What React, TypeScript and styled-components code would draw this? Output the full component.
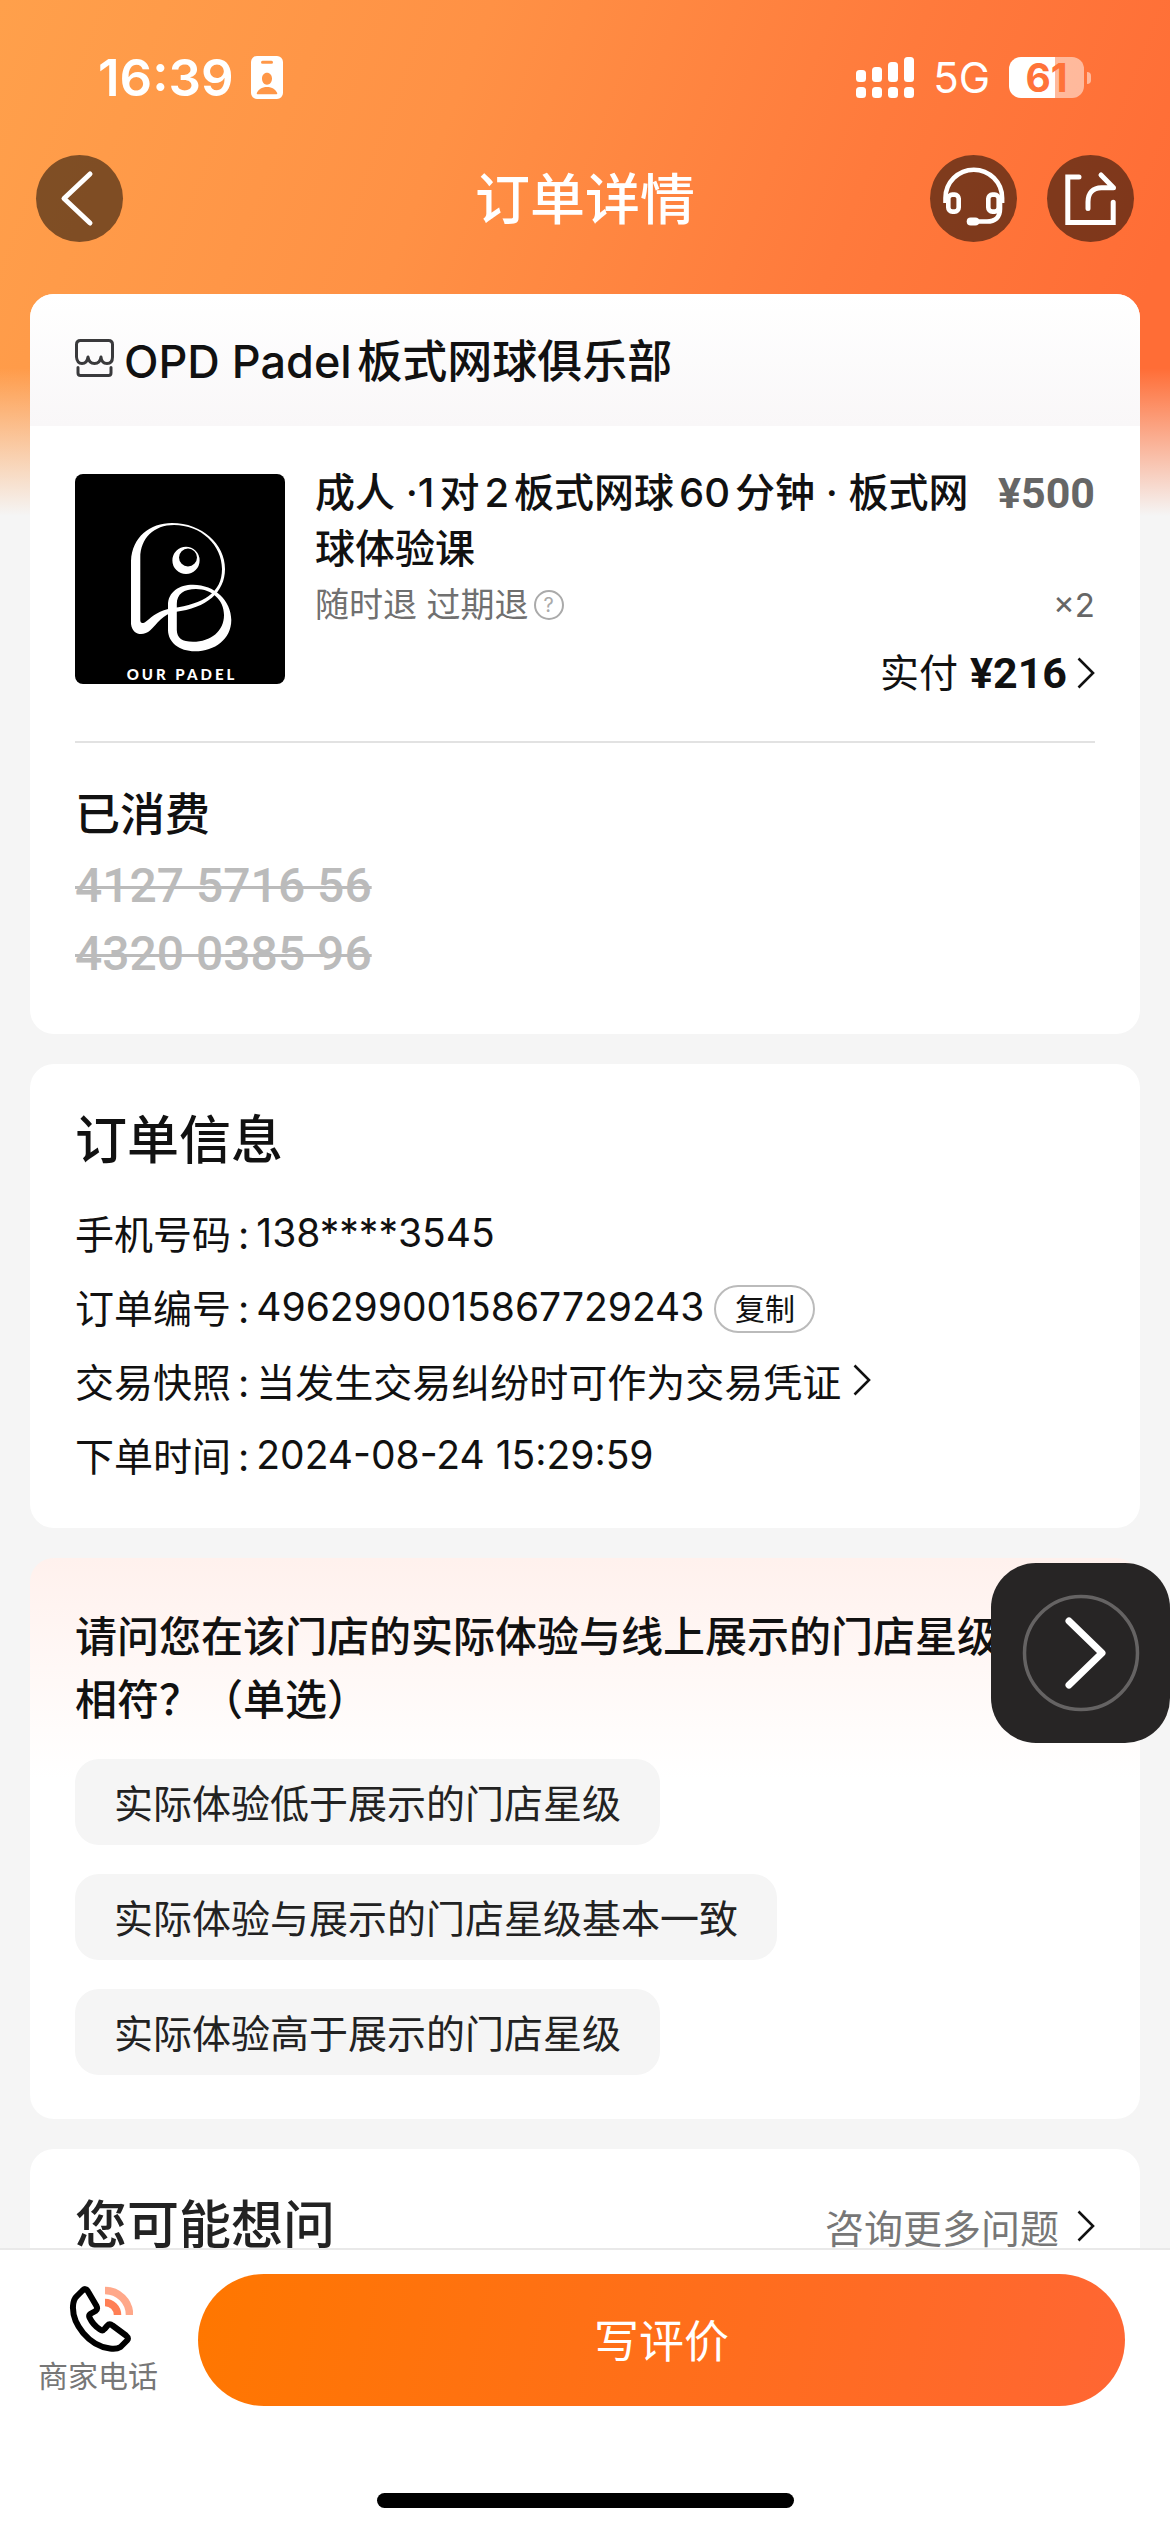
import React from "react";
import styled, { createGlobalStyle } from "styled-components";

const GlobalStyle = createGlobalStyle`
  * { box-sizing: border-box; }
  body {
    margin: 0;
    font-family: Inter, "Noto Sans CJK SC", sans-serif;
    color: #111;
    text-autospace: normal;
    text-spacing-trim: space-all;
  }
  button { font-family: inherit; color: inherit; border: 0; padding: 0; background: none; cursor: pointer; }
  a { color: inherit; text-decoration: none; }
  h1, h2, h3, p, dl, dd, dt, ul { margin: 0; padding: 0; font-weight: 400; }
  svg { display: block; flex: none; }
`;

const Screen = styled.div`
  height: 100vh;
  display: flex;
  flex-direction: column;
  position: relative;
  background-color: #f5f5f5;
  background-image: linear-gradient(180deg, rgba(245, 245, 245, 0) 368px, #f5f5f5 516px),
    linear-gradient(111deg, #ffa04b 0%, #ff9145 36%, #ff7a3c 68%, #ff6d36 92%);
  background-size: 100% 520px;
  background-repeat: no-repeat;
`;

const StatusBar = styled.div`
  flex: none;
  height: 155px;
  padding: 0 79px 0 98px;
  display: flex;
  align-items: center;
  justify-content: space-between;
  color: #fff;
`;

const StatusGroup = styled.div<{ $gap: number }>`
  display: flex;
  align-items: center;
  gap: ${(p) => p.$gap}px;
`;

const Clock = styled.span`
  font-size: 51px;
  line-height: 60px;
  font-weight: 600;
`;

const Network = styled.span`
  font-size: 42px;
  line-height: 60px;
`;

const Battery = styled.span`
  display: flex;
  align-items: center;
  gap: 3px;
  &::after {
    content: "";
    width: 4px;
    height: 12px;
    border-radius: 0 6px 6px 0;
    background: rgba(255, 255, 255, 0.5);
  }
`;

const BatteryBody = styled.span<{ $level: number }>`
  width: 75px;
  height: 41px;
  border-radius: 12px;
  display: grid;
  place-items: center;
  font-size: 39px;
  line-height: 41px;
  font-weight: 700;
  color: #ff7339;
  background: linear-gradient(90deg, #fff ${(p) => p.$level}%, rgba(255, 255, 255, 0.5) ${(p) => p.$level}%);
`;

const NavBar = styled.header`
  flex: none;
  padding: 0 36px;
  display: grid;
  grid-template-columns: 1fr auto 1fr;
  align-items: center;
`;

const NavTitle = styled.h1`
  font-size: 55px;
  line-height: 60px;
  font-weight: 500;
  color: #fff;
`;

const NavActions = styled.div`
  display: flex;
  gap: 30px;
  justify-content: flex-end;
`;

const RoundButton = styled.button`
  width: 87px;
  height: 87px;
  border-radius: 50%;
  background: rgba(0, 0, 0, 0.5);
`;

const Content = styled.main`
  flex: 1;
  min-height: 0;
  overflow-y: auto;
  scrollbar-width: none;
  margin-top: 52px;
  padding: 0 30px;
  display: flex;
  flex-direction: column;
  gap: 30px;
`;

const Card = styled.section<{ $tinted?: boolean; $top: number; $bottom: number }>`
  flex: none;
  border-radius: 24px;
  overflow: hidden;
  padding: ${(p) => p.$top}px 45px ${(p) => p.$bottom}px;
  background: ${(p) => (p.$tinted ? "linear-gradient(180deg, #fff1ed 0, #fff 220px)" : "#fff")};
`;

const Store = styled.a`
  display: flex;
  align-items: center;
  gap: 10px;
  height: 132px;
  margin: 0 -45px;
  padding: 0 45px 4px;
  font-size: 45px;
  font-weight: 500;
  background: linear-gradient(180deg, #fff, #f9f7f8);
`;

const Product = styled.div`
  display: flex;
  align-items: flex-start;
  gap: 30px;
  padding: 39px 0 40px;
  border-bottom: 2px solid #e2e2e2;
`;

const Cover = styled.div`
  flex: none;
  width: 210px;
  height: 210px;
  margin-top: 9px;
  border-radius: 8px;
  overflow: hidden;
  background: #000;
`;

const ProductInfo = styled.div`
  flex: 1;
  min-width: 0;
`;

const SplitRow = styled.div`
  display: flex;
  justify-content: space-between;
  gap: 20px;
  line-height: 56px;
`;

const ProductName = styled.h2`
  font-size: 40px;
  font-weight: 500;
`;

const Price = styled.span<{ $muted?: boolean }>`
  font-family: Roboto, sans-serif;
  font-size: 43px;
  font-weight: 700;
  color: ${(p) => (p.$muted ? "#666" : "#111")};
`;

const Refund = styled.span`
  display: flex;
  align-items: center;
  gap: 5px;
  font-size: 34px;
  color: #707070;
`;

const HelpButton = styled.button`
  width: 30px;
  height: 30px;
  border: 2px solid #aaa;
  border-radius: 50%;
  font-size: 20px;
  line-height: 26px;
  color: #aaa;
`;

const Quantity = styled.span`
  font-size: 33px;
  color: #666;
`;

const Paid = styled.a`
  margin-top: 12px;
  display: flex;
  align-items: center;
  justify-content: flex-end;
  font-size: 39px;
  line-height: 56px;
  ${Price} { margin: 0 10px 0 12px; }
`;

const Used = styled.h3`
  margin: 42px 0 7px;
  font-size: 45px;
  line-height: 60px;
  font-weight: 500;
`;

const Code = styled.p`
  font-family: Roboto, sans-serif;
  font-size: 48px;
  line-height: 68px;
  font-weight: 500;
  color: #bbb;
  text-decoration: line-through;
  text-decoration-thickness: 3px;
`;

const SectionTitle = styled.h2`
  font-size: 52px;
  line-height: 60px;
  font-weight: 500;
`;

const Details = styled.dl`
  margin-top: 24px;
  font-size: 39px;
`;

const DetailRow = styled.div`
  display: flex;
  align-items: center;
  height: 74px;
  dt::after { content: ":"; padding: 0 7px; }
  dd { display: flex; align-items: center; }
`;

const CopyButton = styled.button`
  width: 101px;
  height: 48px;
  margin: 5px 0 0 10px;
  border: 2px solid #bbb;
  border-radius: 24px;
  font-size: 30px;
  line-height: 44px;
`;

const TextLink = styled.a<{ $gap: number; $muted?: boolean }>`
  display: flex;
  align-items: center;
  gap: ${(p) => p.$gap}px;
  font-size: 39px;
  color: ${(p) => (p.$muted ? "#777" : "#111")};
`;

const Question = styled.h2`
  font-size: 42px;
  line-height: 63px;
  font-weight: 500;
  margin-bottom: 28px;
  white-space: nowrap;
`;

const Options = styled.div`
  display: flex;
  flex-direction: column;
  align-items: flex-start;
  gap: 29px;
`;

const Option = styled.button`
  height: 86px;
  padding: 0 39px 3px;
  border-radius: 24px;
  background: #f5f5f5;
  font-size: 39px;
  color: #222;
`;

const AskHeader = styled.div`
  display: flex;
  align-items: center;
  justify-content: space-between;
  color: #222;
`;

const Footer = styled.footer`
  flex: none;
  border-top: 2px solid #e9e9e9;
  background: #fff;
  padding: 24px 0;
`;

const FooterActions = styled.div`
  display: flex;
  align-items: center;
  gap: 40px;
  padding: 0 45px 0 38px;
`;

const CallButton = styled.button`
  display: flex;
  flex-direction: column;
  align-items: center;
  gap: 6px;
  font-size: 30px;
  line-height: 36px;
  color: #777;
`;

const ReviewButton = styled.button`
  flex: 1;
  height: 132px;
  padding-bottom: 3px;
  border-radius: 66px;
  background: linear-gradient(100deg, #ff7700, #ff6633);
  font-size: 45px;
  color: #fff;
`;

const HomeIndicator = styled.div`
  width: 417px;
  height: 15px;
  border-radius: 8px;
  margin: 87px auto 0;
  background: #000;
`;

const FloatingButton = styled.button`
  position: absolute;
  right: 0;
  bottom: 789px;
  width: 179px;
  height: 180px;
  border-radius: 45px;
  background: #272525;
  display: grid;
  place-items: center;
`;

const Chevron = () => (
  <svg width="18" height="32" viewBox="0 0 18 32" fill="none" stroke="#111" strokeWidth="2.600" aria-hidden="true">
    <path d="M1.5 1.5 16 16 1.5 30.5" />
  </svg>
);

const BadgeIcon = () => (
  <svg width="32" height="43" viewBox="0 0 32 43" fill="#fff" fillRule="evenodd" aria-hidden="true">
    <path d="M6 0h20a6 6 0 0 1 6 6v31a6 6 0 0 1-6 6H6a6 6 0 0 1-6-6V6a6 6 0 0 1 6-6Zm5.500 4.700a1.500 1.500 0 0 0 0 3h9a1.500 1.500 0 0 0 0-3ZM16 16.700c-2.900 0-5 2.500-5 5.900s2.100 6.200 5 6.200 5-2.800 5-6.200-2.100-5.900-5-5.900ZM6.500 38.300h19c.6 0 .9-.4.7-1.200-1.200-3.500-5-6.200-10.200-6.200s-9 2.700-10.200 6.200c-.2.800.1 1.200.7 1.200Z" />
  </svg>
);

const SignalIcon = () => (
  <svg width="58" height="41" viewBox="0 0 58 41" fill="#fff" aria-hidden="true">
    {[13, 10, 5, 0].map((top, i) => (
      <g key={top}>
        <rect x={i * 16} y={top} width="10" height={25 - top} rx="3.500" />
        <rect x={i * 16} y="30" width="10" height="11" rx="3.500" />
      </g>
    ))}
  </svg>
);

const BackIcon = () => (
  <svg width="87" height="87" viewBox="0 0 87 87" fill="none" stroke="#fff" strokeWidth="5" strokeLinecap="round" strokeLinejoin="round" aria-hidden="true">
    <path d="M54 19 28 43.500 54 68" />
  </svg>
);

const HeadsetIcon = () => (
  <svg width="87" height="87" viewBox="0 0 87 87" fill="none" stroke="#fff" strokeWidth="4.600" aria-hidden="true">
    <path d="M15.500 48v-5a28.300 28.300 0 0 1 56.600 0v5" />
    <rect x="18.300" y="39.600" width="10.400" height="17" rx="4" />
    <rect x="58.300" y="39.600" width="10.400" height="17" rx="4" />
    <path d="M70 48v6c0 8.500-5 12.500-13 12.500H46" />
    <rect x="36.700" y="62.500" width="12.600" height="8" rx="4" fill="#fff" stroke="none" />
  </svg>
);

const ShareIcon = () => (
  <svg width="87" height="87" viewBox="0 0 87 87" fill="none" stroke="#fff" strokeWidth="5" strokeLinecap="round" aria-hidden="true">
    <path d="M32 22H20.800v45.400h45.400V47.300" />
    <path d="M41 53.500V47c0-9 5-14.300 13.500-14.300h12L54 20" strokeLinejoin="round" />
  </svg>
);

const StoreIcon = () => (
  <svg width="39" height="38" viewBox="0 0 39 38" fill="none" stroke="#3a3a3c" strokeWidth="3" strokeLinejoin="round" strokeLinecap="round" aria-hidden="true">
    <path d="M1.500 18V5.500q0-4 4-4h28q4 0 4 4V18q0 6.500-5.500 6.500T26 18q-1 6.500-6.500 6.500T13 18q-1 6.500-6 6.500T1.500 18Z" />
    <path d="M3 28.500V34q0 2.500 2.500 2.500h28Q36 36.500 36 34v-5.500" />
  </svg>
);

const PadelLogo = () => (
  <svg width="210" height="210" viewBox="0 0 210 210" fill="#fff" fillRule="evenodd" role="img" aria-label="OUR PADEL">
    <path d="M56 87C57 63 75 49 97 49C127 49 150 70 150 95C150 118 132 134 100 138C88 140 82 150 75 156.500C69 162 57.500 162 56 150ZM65.300 84V146.500C65.500 149.500 68 149.800 71 147.500C78 142 84 136 98 134C128 130 147 119 147 95C147 71 126 51 99 51C79 51 65.300 64 65.300 84Z" />
    <path d="M93 131C93 118 104 110.700 118 110.700C140 110.700 156.300 127 156.300 146C156.300 165 140 177.300 120 177.300C104 177.300 93 168 93 156ZM101.800 130V156C102 164 107 167.800 118 167.800C136 167.800 149 157 149 141C149 126 137 115 121 115C109 115 101.800 120 101.800 130Z" />
    <path d="M111 72.800a13.600 13.600 0 1 0 0 27.200a13.600 13.600 0 1 0 0-27.200ZM113 74.500a9 9 0 1 0 0 18a9 9 0 1 0 0-18Z" />
    <text x="107" y="206" textAnchor="middle" fontFamily="Lato, sans-serif" fontWeight="900" fontSize="15" letterSpacing="3">OUR PADEL</text>
  </svg>
);

const CallIcon = () => (
  <svg width="70" height="66" viewBox="0 0 70 66" fill="none" aria-hidden="true">
    <path
      d="M19 5Q22.500 1 25 5.500L33.500 20Q35 23 32.500 25L28 27.500Q25.500 29 26.500 31.500Q30 39 37 43.500Q39.500 45.500 41.500 43L44.500 39.500Q46.500 37 49.500 39.500L63 49.500Q66 52 64 54.500L57.500 61Q53.500 63.500 47 62.500C26 60 9 38 10 20Q10.500 13 14 10Z"
      stroke="#000"
      strokeWidth="6"
      strokeLinejoin="round"
    />
    <path d="M42 16.500A12.500 12.500 0 0 1 54.500 29" stroke="#ff7f55" strokeWidth="7.500" />
    <path d="M42 4.500A24.500 24.500 0 0 1 66.500 29" stroke="#ffa88a" strokeWidth="7.500" />
  </svg>
);

const ExpandIcon = () => (
  <svg width="118" height="118" viewBox="0 0 118 118" fill="none" aria-hidden="true">
    <circle cx="59" cy="59" r="56.500" stroke="#656363" strokeWidth="3.500" />
    <path d="M47 27 80 59 47 91" stroke="#fff" strokeWidth="7" strokeLinecap="round" strokeLinejoin="round" />
  </svg>
);

const codes = ["4127 5716 56", "4320 0385 96"];
const options = ["实际体验低于展示的门店星级", "实际体验与展示的门店星级基本一致", "实际体验高于展示的门店星级"];

export default function App() {
  return (
    <>
      <GlobalStyle />
      <Screen>
        <StatusBar>
          <StatusGroup $gap={17}>
            <Clock>16:39</Clock>
            <BadgeIcon />
          </StatusGroup>
          <StatusGroup $gap={19}>
            <SignalIcon />
            <Network>5G</Network>
            <Battery>
              <BatteryBody $level={61}>61</BatteryBody>
            </Battery>
          </StatusGroup>
        </StatusBar>

        <NavBar>
          <RoundButton aria-label="返回"><BackIcon /></RoundButton>
          <NavTitle>订单详情</NavTitle>
          <NavActions>
            <RoundButton aria-label="客服"><HeadsetIcon /></RoundButton>
            <RoundButton aria-label="分享"><ShareIcon /></RoundButton>
          </NavActions>
        </NavBar>

        <Content>
          <Card $top={0} $bottom={46}>
            <Store href="#store">
              <StoreIcon />
              OPD Padel板式网球俱乐部
            </Store>
            <Product>
              <Cover><PadelLogo /></Cover>
              <ProductInfo>
                <SplitRow>
                  <ProductName>成人 ·1对2板式网球60分钟 · 板式网球体验课</ProductName>
                  <Price $muted>¥500</Price>
                </SplitRow>
                <SplitRow>
                  <Refund>
                    随时退 过期退
                    <HelpButton>?</HelpButton>
                  </Refund>
                  <Quantity>×2</Quantity>
                </SplitRow>
                <Paid href="#payment">
                  实付<Price>¥216</Price>
                  <Chevron />
                </Paid>
              </ProductInfo>
            </Product>
            <Used>已消费</Used>
            {codes.map((code) => (
              <Code key={code}>{code}</Code>
            ))}
          </Card>

          <Card $top={47} $bottom={37}>
            <SectionTitle>订单信息</SectionTitle>
            <Details>
              <DetailRow>
                <dt>手机号码</dt>
                <dd>138****3545</dd>
              </DetailRow>
              <DetailRow>
                <dt>订单编号</dt>
                <dd>
                  4962990015867729243
                  <CopyButton>复制</CopyButton>
                </dd>
              </DetailRow>
              <DetailRow>
                <dt>交易快照</dt>
                <dd>
                  <TextLink href="#snapshot" $gap={12}>
                    当发生交易纠纷时可作为交易凭证
                    <Chevron />
                  </TextLink>
                </dd>
              </DetailRow>
              <DetailRow>
                <dt>下单时间</dt>
                <dd>2024-08-24 15:29:59</dd>
              </DetailRow>
            </Details>
          </Card>

          <Card $tinted $top={47} $bottom={44}>
            <Question>
              请问您在该门店的实际体验与线上展示的门店星级
              <br />
              相符？（单选）
            </Question>
            <Options>
              {options.map((option) => (
                <Option key={option}>{option}</Option>
              ))}
            </Options>
          </Card>

          <Card $top={47} $bottom={45}>
            <AskHeader>
              <SectionTitle>您可能想问</SectionTitle>
              <TextLink href="#ask" $gap={18} $muted>
                咨询更多问题
                <Chevron />
              </TextLink>
            </AskHeader>
          </Card>
        </Content>

        <Footer>
          <FooterActions>
            <CallButton>
              <CallIcon />
              商家电话
            </CallButton>
            <ReviewButton>写评价</ReviewButton>
          </FooterActions>
          <HomeIndicator />
        </Footer>

        <FloatingButton aria-label="展开"><ExpandIcon /></FloatingButton>
      </Screen>
    </>
  );
}
